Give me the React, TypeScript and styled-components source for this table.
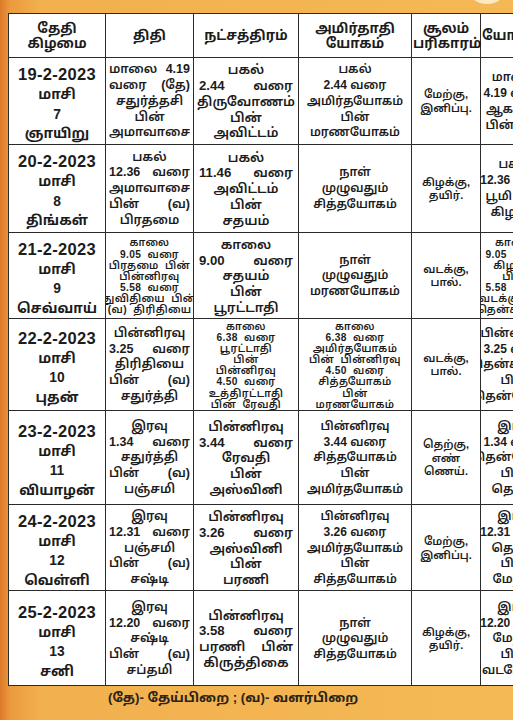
import React from 'react';
import styled, { createGlobalStyle } from 'styled-components';

const GlobalStyle = createGlobalStyle`
  html, body {
    margin: 0;
    padding: 0;
    background: #f3b552;
    overflow: hidden;
  }
`;

interface CellData {
  lines: string[];
  small?: boolean;
  spread?: boolean;
}

interface RowData {
  height: number;
  date: string[];
  cells: CellData[];
}

// font size, line height and side padding for each data column after the date
const colStyle = [
  { size: 12.5, lh: 15.8, pad: 3 },
  { size: 13.2, lh: 15.8, pad: 5 },
  { size: 12, lh: 15.8, pad: 4 },
  { size: 11, lh: 13.5, pad: 3 },
  { size: 12, lh: 15.8, pad: 3 },
];

const Page = styled.div`
  position: relative;
  width: 513px;
  height: 720px;
  overflow: hidden;
  padding-top: 13px;
  box-sizing: border-box;
  background: linear-gradient(to right, #dc7828 0px, #eb9a3e 10px, #f2b04e 40px, #f4b955 100%);
  font-family: 'Liberation Sans', 'Noto Sans Tamil', 'Lohit Tamil', 'Noto Sans', sans-serif;
  color: #1c1c1c;
`;

const SunArc = styled.div`
  position: absolute;
  top: -30px;
  right: 6px;
  width: 40px;
  height: 34px;
  border-radius: 50%;
  background: #fbe9c4;
`;

const Table = styled.table`
  margin-left: 8px;
  width: 541px;
  border-collapse: collapse;
  table-layout: fixed;
  background: #fff;
`;

const HeadCell = styled.th<{ $w: number }>`
  box-sizing: border-box;
  width: ${(p) => p.$w}px;
  height: 44px;
  padding: 0 1px;
  border: 1.5px solid #2b2b2b;
  font-size: 13.5px;
  font-weight: 700;
  line-height: 15px;
  text-align: center;
  vertical-align: middle;
  white-space: nowrap;
`;

const Row = styled.tr<{ $h: number }>`
  height: ${(p) => p.$h}px;
`;

const DateCell = styled.td`
  box-sizing: border-box;
  border: 1.5px solid #2b2b2b;
  padding: 6px 2px 0;
  text-align: center;
  vertical-align: middle;
  font-weight: 700;
  font-size: 13.8px;
  line-height: 19.5px;
  white-space: nowrap;
`;

const DateTop = styled.div`
  font-size: 16.5px;
  letter-spacing: 0.3px;
  line-height: 21px;
`;

const Cell = styled.td<{ $small?: boolean; $size: number; $lh: number; $pad: number }>`
  box-sizing: border-box;
  border: 1.5px solid #2b2b2b;
  padding: 2px ${(p) => p.$pad}px 0;
  text-align: center;
  vertical-align: middle;
  font-size: ${(p) => (p.$small ? 10.2 : p.$size)}px;
  line-height: ${(p) => (p.$small ? 11.1 : p.$lh)}px;
  letter-spacing: ${(p) => (p.$small ? '0.4px' : 'normal')};
  word-spacing: ${(p) => (p.$small ? '3px' : 'normal')};
  font-weight: 600;
  white-space: nowrap;
  overflow: hidden;
`;

const Line = styled.div<{ $spread?: boolean }>`
  display: flex;
  justify-content: ${(p) => (p.$spread ? 'space-between' : 'center')};
  gap: 5px;
`;

const Footer = styled.div`
  padding: 4px 0 0 108px;
  font-size: 13.3px;
  font-weight: 700;
  color: #2a2418;
`;

const headers: { w: number; lines: string[] }[] = [
  { w: 97, lines: ['தேதி', 'கிழமை'] },
  { w: 88, lines: ['திதி'] },
  { w: 105, lines: ['நட்சத்திரம்'] },
  { w: 113, lines: ['அமிர்தாதி', 'யோகம்'] },
  { w: 69, lines: ['சூலம்', 'பரிகாரம்'] },
  { w: 69, lines: ['யோகினி'] },
];

const rows: RowData[] = [
  {
    height: 86,
    date: ['19-2-2023', 'மாசி', '7', 'ஞாயிறு'],
    cells: [
      { lines: ['மாலை 4.19', 'வரை (தே)', 'சதுர்த்தசி', 'பின்', 'அமாவாசை'], spread: true },
      { lines: ['பகல்', '2.44 வரை', 'திருவோணம்', 'பின்', 'அவிட்டம்'], spread: true },
      { lines: ['பகல்', '2.44 வரை', 'அமிர்தயோகம்', 'பின்', 'மரணயோகம்'] },
      { lines: ['மேற்கு,', 'இனிப்பு.'] },
      { lines: ['மாலை', '4.19 வரை', 'ஆகாயம்', 'பின் பூமி'] },
    ],
  },
  {
    height: 88,
    date: ['20-2-2023', 'மாசி', '8', 'திங்கள்'],
    cells: [
      { lines: ['பகல்', '12.36 வரை', 'அமாவாசை', 'பின் (வ)', 'பிரதமை'], spread: true },
      { lines: ['பகல்', '11.46 வரை', 'அவிட்டம்', 'பின்', 'சதயம்'], spread: true },
      { lines: ['நாள்', 'முழுவதும்', 'சித்தயோகம்'] },
      { lines: ['கிழக்கு,', 'தயிர்.'] },
      { lines: ['பகல்', '12.36 வரை', 'பூமி பின்', 'கிழக்கு'] },
    ],
  },
  {
    height: 86,
    date: ['21-2-2023', 'மாசி', '9', 'செவ்வாய்'],
    cells: [
      {
        lines: ['காலை', '9.05 வரை', 'பிரதமை பின்', 'பின்னிரவு', '5.58 வரை', 'துவிதியை பின்', '(வ) திரிதியை'],
        small: true,
      },
      { lines: ['காலை', '9.00 வரை', 'சதயம்', 'பின்', 'பூரட்டாதி'], spread: true },
      { lines: ['நாள்', 'முழுவதும்', 'மரணயோகம்'] },
      { lines: ['வடக்கு,', 'பால்.'] },
      { lines: ['காலை', '9.05 வரை', 'கிழக்கு', 'பின்', '5.58 வரை', 'வடக்கு பின்', 'தென்கிழக்கு'], small: true },
    ],
  },
  {
    height: 91,
    date: ['22-2-2023', 'மாசி', '10', 'புதன்'],
    cells: [
      { lines: ['பின்னிரவு', '3.25 வரை', 'திரிதியை', 'பின் (வ)', 'சதுர்த்தி'], spread: true },
      {
        lines: ['காலை', '6.38 வரை', 'பூரட்டாதி', 'பின்', 'பின்னிரவு', '4.50 வரை', 'உத்திரட்டாதி', 'பின் ரேவதி'],
        small: true,
      },
      {
        lines: ['காலை', '6.38 வரை', 'அமிர்தயோகம்', 'பின் பின்னிரவு', '4.50 வரை', 'சித்தயோகம்', 'பின்', 'மரணயோகம்'],
        small: true,
      },
      { lines: ['வடக்கு,', 'பால்.'] },
      { lines: ['பின்னிரவு', '3.25 வரை', 'தென்கிழக்கு', 'பின்', 'தென்மேற்கு'] },
    ],
  },
  {
    height: 94,
    date: ['23-2-2023', 'மாசி', '11', 'வியாழன்'],
    cells: [
      { lines: ['இரவு', '1.34 வரை', 'சதுர்த்தி', 'பின் (வ)', 'பஞ்சமி'], spread: true },
      { lines: ['பின்னிரவு', '3.44 வரை', 'ரேவதி', 'பின்', 'அஸ்வினி'], spread: true },
      { lines: ['பின்னிரவு', '3.44 வரை', 'சித்தயோகம்', 'பின்', 'அமிர்தயோகம்'] },
      { lines: ['தெற்கு,', 'எண்', 'ணெய்.'] },
      { lines: ['இரவு', '1.34 வரை', 'தென்மேற்கு', 'பின்', 'தெற்கு'] },
    ],
  },
  {
    height: 86,
    date: ['24-2-2023', 'மாசி', '12', 'வெள்ளி'],
    cells: [
      { lines: ['இரவு', '12.31 வரை', 'பஞ்சமி', 'பின் (வ)', 'சஷ்டி'], spread: true },
      { lines: ['பின்னிரவு', '3.26 வரை', 'அஸ்வினி', 'பின்', 'பரணி'], spread: true },
      { lines: ['பின்னிரவு', '3.26 வரை', 'அமிர்தயோகம்', 'பின்', 'சித்தயோகம்'] },
      { lines: ['மேற்கு,', 'இனிப்பு.'] },
      { lines: ['இரவு', '12.31 வரை', 'தெற்கு', 'பின்', 'மேற்கு'] },
    ],
  },
  {
    height: 95,
    date: ['25-2-2023', 'மாசி', '13', 'சனி'],
    cells: [
      { lines: ['இரவு', '12.20 வரை', 'சஷ்டி', 'பின் (வ)', 'சப்தமி'], spread: true },
      { lines: ['பின்னிரவு', '3.58 வரை', 'பரணி பின்', 'கிருத்திகை'], spread: true },
      { lines: ['நாள்', 'முழுவதும்', 'சித்தயோகம்'] },
      { lines: ['கிழக்கு,', 'தயிர்.'] },
      { lines: ['இரவு', '12.20 வரை', 'மேற்கு', 'பின்', 'வடமேற்கு'] },
    ],
  },
];

const App = () => (
  <Page>
    <GlobalStyle />
    <SunArc />
    <Table>
      <thead>
        <tr>
          {headers.map((h) => (
            <HeadCell key={h.lines[0]} $w={h.w}>
              {h.lines.map((l) => (
                <div key={l}>{l}</div>
              ))}
            </HeadCell>
          ))}
        </tr>
      </thead>
      <tbody>
        {rows.map((r) => (
          <Row key={r.date[0]} $h={r.height}>
            <DateCell>
              <DateTop>{r.date[0]}</DateTop>
              {r.date.slice(1).map((l) => (
                <div key={l}>{l}</div>
              ))}
            </DateCell>
            {r.cells.map((c, i) => {
              const split = (l: string) => !!c.spread && l.includes(' ');
              const s = colStyle[i];
              return (
                <Cell key={i} $small={c.small} $size={s.size} $lh={s.lh} $pad={s.pad}>
                  {c.lines.map((l, j) => (
                    <Line key={j} $spread={split(l)}>
                      {split(l) ? l.split(' ').map((w) => <span key={w}>{w}</span>) : l}
                    </Line>
                  ))}
                </Cell>
              );
            })}
          </Row>
        ))}
      </tbody>
    </Table>
    <Footer>(தே)- தேய்பிறை ; (வ)- வளர்பிறை</Footer>
  </Page>
);

export default App;
